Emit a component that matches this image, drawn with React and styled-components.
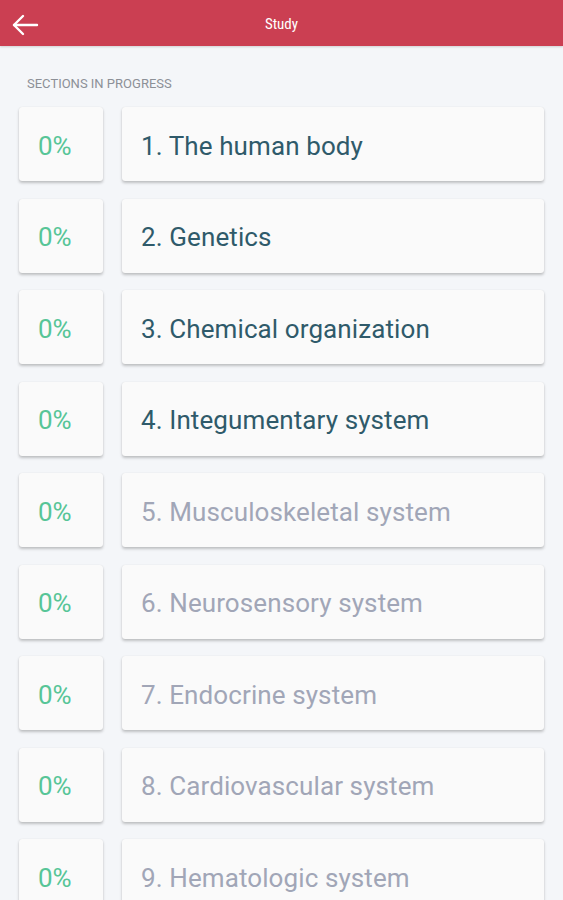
import styled, { createGlobalStyle } from "styled-components";

const GlobalStyle = createGlobalStyle`
  html, body {
    margin: 0;
    padding: 0;
    background: #f4f6f9;
    font-family: Roboto, "Noto Sans", sans-serif;
  }
`;

const Page = styled.div`
  min-height: 900px;
  background: #f4f6f9;
`;

const Header = styled.header`
  height: 46px;
  background: #cb3f52;
  display: flex;
  align-items: center;
  justify-content: center;
  position: relative;
  box-shadow: 0 1px 2px rgba(0, 0, 0, 0.15);
`;

const BackButton = styled.button`
  position: absolute;
  left: 10px;
  top: 10px;
  background: none;
  border: none;
  padding: 0;
  width: 30px;
  height: 30px;
  display: flex;
  align-items: center;
  justify-content: center;
`;

const Title = styled.h1`
  margin: 2px 0 0 0;
  color: #fff;
  font-family: "Roboto Condensed", "Liberation Sans Narrow", "DejaVu Sans Condensed", sans-serif;
  font-stretch: condensed;
  font-size: 15px;
  font-weight: 400;
`;

const Content = styled.main`
  padding: 30px 19px 0 19px;
`;

const SectionLabel = styled.div`
  font-size: 13px;
  color: #8c9097;
  margin-left: 8px;
  margin-bottom: 16px;
`;

const List = styled.div`
  display: flex;
  flex-direction: column;
  gap: 17.5px;
`;

const Row = styled.div`
  display: flex;
  gap: 19px;
  width: 525px;
`;

const Card = styled.div`
  background: #fafafa;
  border-radius: 3px;
  box-shadow: 0 2px 3px rgba(0, 0, 0, 0.22), 0 0 1px rgba(0, 0, 0, 0.12);
  height: 74px;
  display: flex;
  align-items: center;
  box-sizing: border-box;
  padding-top: 3px;
`;

const Percent = styled(Card)`
  width: 84px;
  padding-left: 19px;
  font-size: 26px;
  color: #57c597;
`;

const Topic = styled(Card)`
  flex: 1;
  padding-left: 19px;
  font-size: 26px;
  letter-spacing: 0.1px;
  color: ${(p) => (p.$active ? "#2f5a6a" : "#a1a6b7")};
`;

const sections = [
  "The human body",
  "Genetics",
  "Chemical organization",
  "Integumentary system",
  "Musculoskeletal system",
  "Neurosensory system",
  "Endocrine system",
  "Cardiovascular system",
  "Hematologic system",
];

export default function App() {
  return (
    <Page>
      <GlobalStyle />
      <Header>
        <BackButton aria-label="back">
          <svg width="28" height="24" viewBox="0 0 28 24" fill="none" stroke="#fff" strokeWidth="2.4" strokeLinecap="round" strokeLinejoin="round">
            <path d="M26 12H3" />
            <path d="M12 3L3 12l9 9" />
          </svg>
        </BackButton>
        <Title>Study</Title>
      </Header>
      <Content>
        <SectionLabel>SECTIONS IN PROGRESS</SectionLabel>
        <List>
          {sections.map((s, i) => (
            <Row key={s}>
              <Percent>0%</Percent>
              <Topic $active={i < 4}>
                {i + 1}. {s}
              </Topic>
            </Row>
          ))}
        </List>
      </Content>
    </Page>
  );
}
